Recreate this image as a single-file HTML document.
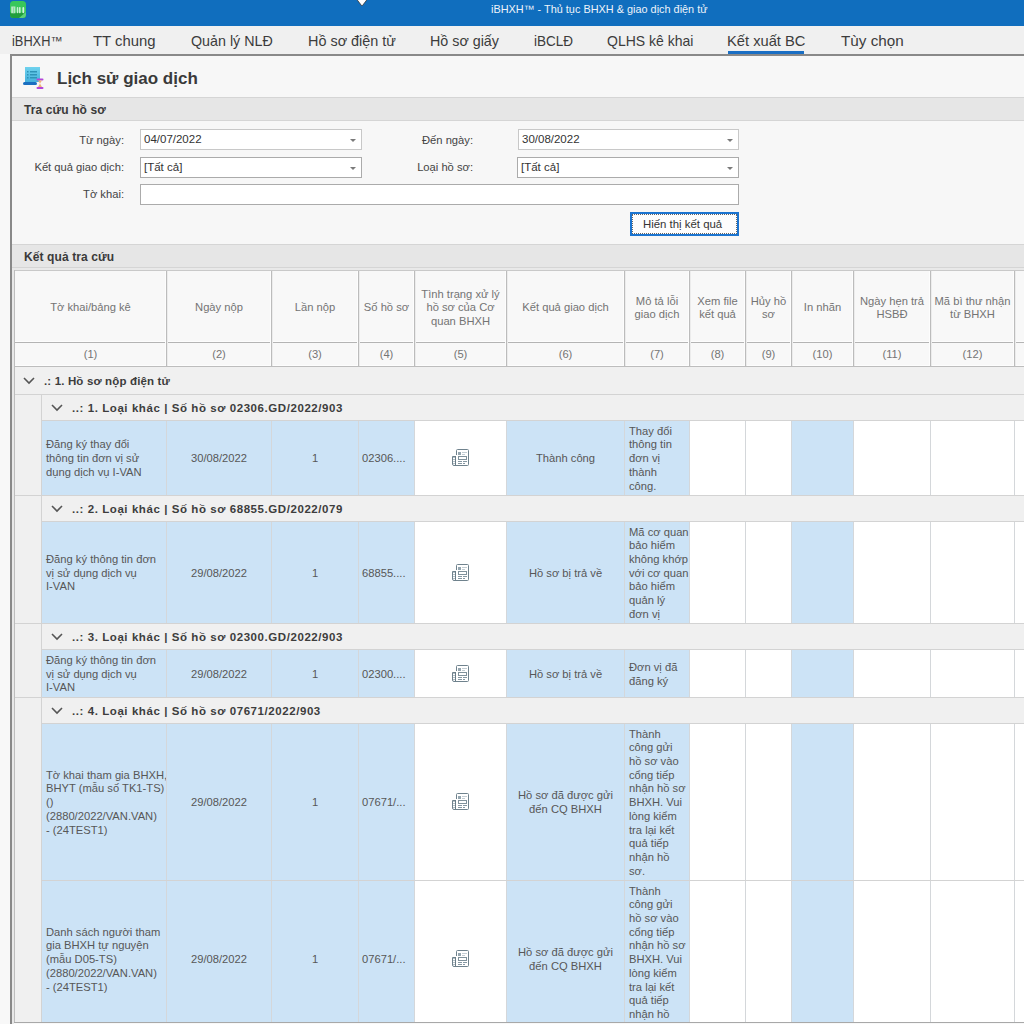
<!DOCTYPE html>
<html><head><meta charset="utf-8"><style>
html,body{margin:0;padding:0;width:1024px;height:1024px;overflow:hidden;background:#f7f7f7;position:relative;font-family:"Liberation Sans", sans-serif}
body>div,body>svg{position:absolute}
.t{white-space:nowrap}
.c{display:flex;align-items:safe center;overflow:hidden;box-sizing:border-box}
.c span{white-space:nowrap}
</style></head><body>
<div style="left:0px;top:0px;width:1024px;height:26px;background:#106ebe"></div>
<svg style="left:10px;top:1px" width="16" height="17" viewBox="0 0 16 17">
<defs><clipPath id="cp1"><rect x="0" y="0" width="16" height="17" rx="3.5"/></clipPath></defs>
<g clip-path="url(#cp1)">
<rect x="0" y="0" width="16" height="17" fill="#38c75a"/>
<rect x="0" y="11.5" width="16" height="6" fill="#219e3c"/>
<path d="M9 17 L16 11 L16 17 Z" fill="#5cd27a"/>
<path d="M1.2 5.6 H5.4 V12.2 H1.2 Z" fill="#b9e9c4"/>
<rect x="3.2" y="6.4" width="0.9" height="5.8" fill="#7fd494"/>
<rect x="6.8" y="6" width="1.5" height="6.2" rx="0.7" fill="#c9f0d2"/>
<rect x="9" y="6" width="1.6" height="6.2" rx="0.7" fill="#c9f0d2"/>
<rect x="12.4" y="6" width="1.8" height="6.2" rx="0.9" fill="#d2f3da"/>
</g></svg>
<svg style="left:356px;top:0px" width="12" height="7" viewBox="0 0 12 7"><path d="M0.5 -1 L5.5 5.5 L6.5 5.5 L11.5 -1 Z" fill="#fff" stroke="#333" stroke-width="0.8"/></svg>
<div class="t" style="left:491px;top:0px;font-size:11px;color:#eef3fa;line-height:18px;transform:scaleX(0.99);transform-origin:0 0">iBHXH™ - Thủ tục BHXH &amp; giao dịch điện tử</div>
<div style="left:0px;top:26px;width:1024px;height:28px;background:#f0f0f0"></div>
<div class="t" style="left:50.5px;top:31px;font-size:12px;color:#3c3c3c;line-height:20px;transform:scaleX(1.0);transform-origin:0 0">™</div>
<div class="t" style="left:11.5px;top:31px;font-size:14.5px;color:#3c3c3c;line-height:20px;transform:scaleX(0.8824);transform-origin:0 0">iBHXH</div>
<div class="t" style="left:93px;top:31px;font-size:14.5px;color:#3c3c3c;line-height:20px;transform:scaleX(1.0250);transform-origin:0 0">TT chung</div>
<div class="t" style="left:191px;top:31px;font-size:14.5px;color:#3c3c3c;line-height:20px;transform:scaleX(0.9848);transform-origin:0 0">Quản lý NLĐ</div>
<div class="t" style="left:308px;top:31px;font-size:14.5px;color:#3c3c3c;line-height:20px;transform:scaleX(0.9943);transform-origin:0 0">Hồ sơ điện tử</div>
<div class="t" style="left:430px;top:31px;font-size:14.5px;color:#3c3c3c;line-height:20px;transform:scaleX(0.9853);transform-origin:0 0">Hồ sơ giấy</div>
<div class="t" style="left:533.5px;top:31px;font-size:14.5px;color:#3c3c3c;line-height:20px;transform:scaleX(0.9313);transform-origin:0 0">iBCLĐ</div>
<div class="t" style="left:607px;top:31px;font-size:14.5px;color:#3c3c3c;line-height:20px;transform:scaleX(0.9659);transform-origin:0 0">QLHS kê khai</div>
<div class="t" style="left:727px;top:31px;font-size:14.5px;color:#3c3c3c;line-height:20px;transform:scaleX(1.0133);transform-origin:0 0">Kết xuất BC</div>
<div class="t" style="left:840.5px;top:31px;font-size:14.5px;color:#3c3c3c;line-height:20px;transform:scaleX(1.0508);transform-origin:0 0">Tùy chọn</div>
<div style="left:728px;top:51px;width:76px;height:3px;background:#1a6fc4"></div>
<div style="left:0px;top:54px;width:1024px;height:970px;background:#f8f8f8"></div>
<div style="left:10px;top:54px;width:1014px;height:2px;background:#898989"></div>
<div style="left:10px;top:54px;width:2px;height:970px;background:#898989"></div>
<div style="left:12px;top:56px;width:1012px;height:968px;background:#f7f7f7"></div>
<svg style="left:22px;top:66px" width="22" height="24" viewBox="0 0 22 24">
<defs><linearGradient id="g2" x1="0" y1="0" x2="0" y2="1"><stop offset="0" stop-color="#6fd2ee"/><stop offset="1" stop-color="#45b0dc"/></linearGradient></defs>
<rect x="3" y="1" width="15" height="15" fill="url(#g2)"/>
<rect x="5" y="5" width="1.5" height="1.5" fill="#2e93b8"/><rect x="8" y="5" width="7" height="1.5" fill="#2e93b8"/>
<rect x="5" y="8" width="1.5" height="1.5" fill="#2e93b8"/><rect x="8" y="8" width="7" height="1.5" fill="#2e93b8"/>
<rect x="5" y="11" width="1.5" height="1.5" fill="#2e93b8"/><rect x="8" y="11" width="7" height="1.5" fill="#2e93b8"/>
<rect x="1" y="16" width="14" height="3" rx="1.5" fill="#1a6fc0"/>
<rect x="14.5" y="12.5" width="7" height="2" rx="1" fill="#b347d9"/>
<rect x="14.5" y="21" width="7" height="2" rx="1" fill="#b347d9"/>
<path d="M16 14.5 L20 14.5 L18 17.5 L20 21 L16 21 L18 17.5 Z" fill="#f0b37a"/>
</svg>
<div class="t" style="left:57px;top:68px;font-size:17px;font-weight:bold;color:#3a3a3a;line-height:22px">Lịch sử giao dịch</div>
<div style="left:12px;top:97px;width:1012px;height:1px;background:#d5d5d5"></div>
<div style="left:12px;top:98px;width:1012px;height:22px;background:#e6e6e6"></div>
<div style="left:12px;top:120px;width:1012px;height:1px;background:#d5d5d5"></div>
<div class="t" style="left:24px;top:102px;font-size:12px;font-weight:bold;color:#3a3a3a;line-height:17px;letter-spacing:0.1px">Tra cứu hồ sơ</div>
<div class="t" style="left:-76px;top:133px;width:200px;text-align:right;font-size:11.2px;color:#444;line-height:14px">Từ ngày:</div>
<div class="t" style="left:-76px;top:160px;width:200px;text-align:right;font-size:11.2px;color:#444;line-height:14px">Kết quả giao dịch:</div>
<div class="t" style="left:-76px;top:187px;width:200px;text-align:right;font-size:11.2px;color:#444;line-height:14px">Tờ khai:</div>
<div style="left:140px;top:129px;width:222px;height:21px;background:#fff;border:1px solid #c8c8c8;box-sizing:border-box"></div>
<div class="t" style="left:144px;top:132px;font-size:11.5px;color:#333;line-height:14px">04/07/2022</div>
<svg style="left:350px;top:139px" width="6" height="4" viewBox="0 0 6 4"><path d="M0 0 L6 0 L3 3 Z" fill="#7a7a7a"/></svg>
<div style="left:140px;top:157px;width:222px;height:21px;background:#fff;border:1px solid #ababab;box-sizing:border-box"></div>
<div class="t" style="left:144px;top:160px;font-size:11.5px;color:#333;line-height:14px">[Tất cả]</div>
<svg style="left:350px;top:167px" width="6" height="4" viewBox="0 0 6 4"><path d="M0 0 L6 0 L3 3 Z" fill="#7a7a7a"/></svg>
<div style="left:140px;top:184px;width:599px;height:21px;background:#fff;border:1px solid #ababab;box-sizing:border-box"></div>
<div class="t" style="left:273px;top:133px;width:200px;text-align:right;font-size:11.2px;color:#444;line-height:14px">Đến ngày:</div>
<div class="t" style="left:273px;top:160px;width:200px;text-align:right;font-size:11.2px;color:#444;line-height:14px">Loại hồ sơ:</div>
<div style="left:518px;top:129px;width:221px;height:21px;background:#fff;border:1px solid #c8c8c8;box-sizing:border-box"></div>
<div class="t" style="left:522px;top:132px;font-size:11.5px;color:#333;line-height:14px">30/08/2022</div>
<svg style="left:727px;top:139px" width="6" height="4" viewBox="0 0 6 4"><path d="M0 0 L6 0 L3 3 Z" fill="#7a7a7a"/></svg>
<div style="left:517px;top:157px;width:222px;height:21px;background:#fff;border:1px solid #ababab;box-sizing:border-box"></div>
<div class="t" style="left:521px;top:160px;font-size:11.5px;color:#333;line-height:14px">[Tất cả]</div>
<svg style="left:727px;top:167px" width="6" height="4" viewBox="0 0 6 4"><path d="M0 0 L6 0 L3 3 Z" fill="#7a7a7a"/></svg>
<div style="left:630px;top:212px;width:109px;height:24px;background:#fdfdfd;border:2px solid #1b74d0;box-sizing:border-box"></div>
<div style="left:632px;top:214px;width:105px;height:20px;border:1px dotted #666;box-sizing:border-box"></div>
<div class="t" style="left:643px;top:217px;font-size:11.4px;color:#333;line-height:14px">Hiến thị kết quả</div>
<div style="left:12px;top:244px;width:1012px;height:1px;background:#d5d5d5"></div>
<div style="left:12px;top:245px;width:1012px;height:22px;background:#e6e6e6"></div>
<div style="left:12px;top:267px;width:1012px;height:1px;background:#d5d5d5"></div>
<div class="t" style="left:24px;top:249px;font-size:12px;font-weight:bold;color:#3a3a3a;line-height:17px;letter-spacing:0.1px">Kết quả tra cứu</div>
<div style="left:14px;top:270px;width:1010px;height:1px;background:#c9c9c9"></div>
<div style="left:14px;top:270px;width:1px;height:753px;background:#bdbdbd"></div>
<div style="left:15px;top:271px;width:1009px;height:72px;background:#f8f8f8"></div>
<div style="left:15px;top:343px;width:1009px;height:23px;background:#f8f8f8"></div>
<div style="left:15px;top:342px;width:1009px;height:1px;background:#b4b4b4"></div>
<div style="left:15px;top:366px;width:1009px;height:1px;background:#bdbdbd"></div>
<div style="left:15px;top:341px;width:1009px;height:1px;background:#fdfdfd"></div>
<div style="left:15px;top:365px;width:1009px;height:1px;background:#fdfdfd"></div>
<div style="left:165px;top:271px;width:1px;height:94px;background:#fdfdfd"></div>
<div style="left:166px;top:271px;width:1px;height:95px;background:#bcbcbc"></div>
<div style="left:167px;top:271px;width:1px;height:95px;background:#ececec"></div>
<div style="left:270px;top:271px;width:1px;height:94px;background:#fdfdfd"></div>
<div style="left:271px;top:271px;width:1px;height:95px;background:#bcbcbc"></div>
<div style="left:272px;top:271px;width:1px;height:95px;background:#ececec"></div>
<div style="left:357px;top:271px;width:1px;height:94px;background:#fdfdfd"></div>
<div style="left:358px;top:271px;width:1px;height:95px;background:#bcbcbc"></div>
<div style="left:359px;top:271px;width:1px;height:95px;background:#ececec"></div>
<div style="left:413px;top:271px;width:1px;height:94px;background:#fdfdfd"></div>
<div style="left:414px;top:271px;width:1px;height:95px;background:#bcbcbc"></div>
<div style="left:415px;top:271px;width:1px;height:95px;background:#ececec"></div>
<div style="left:505px;top:271px;width:1px;height:94px;background:#fdfdfd"></div>
<div style="left:506px;top:271px;width:1px;height:95px;background:#bcbcbc"></div>
<div style="left:507px;top:271px;width:1px;height:95px;background:#ececec"></div>
<div style="left:623px;top:271px;width:1px;height:94px;background:#fdfdfd"></div>
<div style="left:624px;top:271px;width:1px;height:95px;background:#bcbcbc"></div>
<div style="left:625px;top:271px;width:1px;height:95px;background:#ececec"></div>
<div style="left:688px;top:271px;width:1px;height:94px;background:#fdfdfd"></div>
<div style="left:689px;top:271px;width:1px;height:95px;background:#bcbcbc"></div>
<div style="left:690px;top:271px;width:1px;height:95px;background:#ececec"></div>
<div style="left:744px;top:271px;width:1px;height:94px;background:#fdfdfd"></div>
<div style="left:745px;top:271px;width:1px;height:95px;background:#bcbcbc"></div>
<div style="left:746px;top:271px;width:1px;height:95px;background:#ececec"></div>
<div style="left:790px;top:271px;width:1px;height:94px;background:#fdfdfd"></div>
<div style="left:791px;top:271px;width:1px;height:95px;background:#bcbcbc"></div>
<div style="left:792px;top:271px;width:1px;height:95px;background:#ececec"></div>
<div style="left:852px;top:271px;width:1px;height:94px;background:#fdfdfd"></div>
<div style="left:853px;top:271px;width:1px;height:95px;background:#bcbcbc"></div>
<div style="left:854px;top:271px;width:1px;height:95px;background:#ececec"></div>
<div style="left:929px;top:271px;width:1px;height:94px;background:#fdfdfd"></div>
<div style="left:930px;top:271px;width:1px;height:95px;background:#bcbcbc"></div>
<div style="left:931px;top:271px;width:1px;height:95px;background:#ececec"></div>
<div style="left:1013px;top:271px;width:1px;height:94px;background:#fdfdfd"></div>
<div style="left:1014px;top:271px;width:1px;height:95px;background:#bcbcbc"></div>
<div style="left:1015px;top:271px;width:1px;height:95px;background:#ececec"></div>
<div class="c" style="left:15px;top:271px;width:151px;height:71px;font-size:11.2px;color:#747474;line-height:13.5px;text-align:center;justify-content:center"><span style="position:relative;top:1.5px">Tờ khai/bảng kê</span></div>
<div class="c" style="left:15px;top:343px;width:151px;height:23px;font-size:11.2px;color:#747474;line-height:13.5px;text-align:center;justify-content:center"><span style="position:relative;top:0.5px">(1)</span></div>
<div class="c" style="left:167px;top:271px;width:104px;height:71px;font-size:11.2px;color:#747474;line-height:13.5px;text-align:center;justify-content:center"><span style="position:relative;top:1.5px">Ngày nộp</span></div>
<div class="c" style="left:167px;top:343px;width:104px;height:23px;font-size:11.2px;color:#747474;line-height:13.5px;text-align:center;justify-content:center"><span style="position:relative;top:0.5px">(2)</span></div>
<div class="c" style="left:272px;top:271px;width:86px;height:71px;font-size:11.2px;color:#747474;line-height:13.5px;text-align:center;justify-content:center"><span style="position:relative;top:1.5px">Lần nộp</span></div>
<div class="c" style="left:272px;top:343px;width:86px;height:23px;font-size:11.2px;color:#747474;line-height:13.5px;text-align:center;justify-content:center"><span style="position:relative;top:0.5px">(3)</span></div>
<div class="c" style="left:359px;top:271px;width:55px;height:71px;font-size:11.2px;color:#747474;line-height:13.5px;text-align:center;justify-content:center"><span style="position:relative;top:1.5px">Số hồ sơ</span></div>
<div class="c" style="left:359px;top:343px;width:55px;height:23px;font-size:11.2px;color:#747474;line-height:13.5px;text-align:center;justify-content:center"><span style="position:relative;top:0.5px">(4)</span></div>
<div class="c" style="left:415px;top:271px;width:91px;height:71px;font-size:11.2px;color:#747474;line-height:13.5px;text-align:center;justify-content:center"><span style="position:relative;top:1.5px">Tình trạng xử lý<br>hồ sơ của Cơ<br>quan BHXH</span></div>
<div class="c" style="left:415px;top:343px;width:91px;height:23px;font-size:11.2px;color:#747474;line-height:13.5px;text-align:center;justify-content:center"><span style="position:relative;top:0.5px">(5)</span></div>
<div class="c" style="left:507px;top:271px;width:117px;height:71px;font-size:11.2px;color:#747474;line-height:13.5px;text-align:center;justify-content:center"><span style="position:relative;top:1.5px">Kết quả giao dịch</span></div>
<div class="c" style="left:507px;top:343px;width:117px;height:23px;font-size:11.2px;color:#747474;line-height:13.5px;text-align:center;justify-content:center"><span style="position:relative;top:0.5px">(6)</span></div>
<div class="c" style="left:625px;top:271px;width:64px;height:71px;font-size:11.2px;color:#747474;line-height:13.5px;text-align:center;justify-content:center"><span style="position:relative;top:1.5px">Mô tả lỗi<br>giao dịch</span></div>
<div class="c" style="left:625px;top:343px;width:64px;height:23px;font-size:11.2px;color:#747474;line-height:13.5px;text-align:center;justify-content:center"><span style="position:relative;top:0.5px">(7)</span></div>
<div class="c" style="left:690px;top:271px;width:55px;height:71px;font-size:11.2px;color:#747474;line-height:13.5px;text-align:center;justify-content:center"><span style="position:relative;top:1.5px">Xem file<br>kết quả</span></div>
<div class="c" style="left:690px;top:343px;width:55px;height:23px;font-size:11.2px;color:#747474;line-height:13.5px;text-align:center;justify-content:center"><span style="position:relative;top:0.5px">(8)</span></div>
<div class="c" style="left:746px;top:271px;width:45px;height:71px;font-size:11.2px;color:#747474;line-height:13.5px;text-align:center;justify-content:center"><span style="position:relative;top:1.5px">Hủy hồ<br>sơ</span></div>
<div class="c" style="left:746px;top:343px;width:45px;height:23px;font-size:11.2px;color:#747474;line-height:13.5px;text-align:center;justify-content:center"><span style="position:relative;top:0.5px">(9)</span></div>
<div class="c" style="left:792px;top:271px;width:61px;height:71px;font-size:11.2px;color:#747474;line-height:13.5px;text-align:center;justify-content:center"><span style="position:relative;top:1.5px">In nhãn</span></div>
<div class="c" style="left:792px;top:343px;width:61px;height:23px;font-size:11.2px;color:#747474;line-height:13.5px;text-align:center;justify-content:center"><span style="position:relative;top:0.5px">(10)</span></div>
<div class="c" style="left:854px;top:271px;width:76px;height:71px;font-size:11.2px;color:#747474;line-height:13.5px;text-align:center;justify-content:center"><span style="position:relative;top:1.5px">Ngày hẹn trả<br>HSBĐ</span></div>
<div class="c" style="left:854px;top:343px;width:76px;height:23px;font-size:11.2px;color:#747474;line-height:13.5px;text-align:center;justify-content:center"><span style="position:relative;top:0.5px">(11)</span></div>
<div class="c" style="left:931px;top:271px;width:83px;height:71px;font-size:11.2px;color:#747474;line-height:13.5px;text-align:center;justify-content:center"><span style="position:relative;top:1.5px">Mã bì thư nhận<br>từ BHXH</span></div>
<div class="c" style="left:931px;top:343px;width:83px;height:23px;font-size:11.2px;color:#747474;line-height:13.5px;text-align:center;justify-content:center"><span style="position:relative;top:0.5px">(12)</span></div>
<div style="left:15px;top:367px;width:1009px;height:27px;background:#f0f0f0"></div>
<div style="left:15px;top:394px;width:1009px;height:1px;background:#d3d3d3"></div>
<svg style="left:23px;top:377px" width="12" height="8" viewBox="0 0 12 8"><path d="M1 1 L6 6 L11 1" fill="none" stroke="#555" stroke-width="1.6"/></svg>
<div class="t" style="left:44px;top:374px;font-size:11.5px;font-weight:bold;color:#3d3d3d;line-height:14px;letter-spacing:0.15px">.: 1. Hồ sơ nộp điện tử</div>
<div style="left:15px;top:395px;width:26px;height:627px;background:#f0f0f0"></div>
<div style="left:41px;top:395px;width:1px;height:627px;background:#d3d3d3"></div>
<div style="left:42px;top:395px;width:982px;height:25px;background:#f0f0f0"></div>
<div style="left:42px;top:420px;width:982px;height:1px;background:#d3d3d3"></div>
<svg style="left:51px;top:404px" width="12" height="8" viewBox="0 0 12 8"><path d="M1 1 L6 6 L11 1" fill="none" stroke="#555" stroke-width="1.6"/></svg>
<div class="t" style="left:72px;top:401px;font-size:11.5px;font-weight:bold;color:#3d3d3d;line-height:14px;letter-spacing:0.57px">..: 1. Loại khác | Số hồ sơ 02306.GD/2022/903</div>
<div style="left:42px;top:421px;width:124px;height:74px;background:#cce3f6"></div>
<div style="left:166px;top:421px;width:105px;height:74px;background:#cce3f6"></div>
<div style="left:271px;top:421px;width:87px;height:74px;background:#cce3f6"></div>
<div style="left:358px;top:421px;width:56px;height:74px;background:#cce3f6"></div>
<div style="left:414px;top:421px;width:92px;height:74px;background:#ffffff"></div>
<div style="left:506px;top:421px;width:118px;height:74px;background:#cce3f6"></div>
<div style="left:624px;top:421px;width:65px;height:74px;background:#cce3f6"></div>
<div style="left:689px;top:421px;width:56px;height:74px;background:#ffffff"></div>
<div style="left:745px;top:421px;width:46px;height:74px;background:#ffffff"></div>
<div style="left:791px;top:421px;width:62px;height:74px;background:#cce3f6"></div>
<div style="left:853px;top:421px;width:77px;height:74px;background:#ffffff"></div>
<div style="left:930px;top:421px;width:84px;height:74px;background:#ffffff"></div>
<div style="left:1014px;top:421px;width:10px;height:74px;background:#ffffff"></div>
<div style="left:166px;top:421px;width:1px;height:74px;background:#d4d7da"></div>
<div style="left:271px;top:421px;width:1px;height:74px;background:#d4d7da"></div>
<div style="left:358px;top:421px;width:1px;height:74px;background:#d4d7da"></div>
<div style="left:414px;top:421px;width:1px;height:74px;background:#d4d7da"></div>
<div style="left:506px;top:421px;width:1px;height:74px;background:#d4d7da"></div>
<div style="left:624px;top:421px;width:1px;height:74px;background:#d4d7da"></div>
<div style="left:689px;top:421px;width:1px;height:74px;background:#d4d7da"></div>
<div style="left:745px;top:421px;width:1px;height:74px;background:#d4d7da"></div>
<div style="left:791px;top:421px;width:1px;height:74px;background:#d4d7da"></div>
<div style="left:853px;top:421px;width:1px;height:74px;background:#d4d7da"></div>
<div style="left:930px;top:421px;width:1px;height:74px;background:#d4d7da"></div>
<div style="left:1014px;top:421px;width:1px;height:74px;background:#d4d7da"></div>
<div style="left:15px;top:495px;width:1009px;height:1px;background:#d3d3d3"></div>
<div class="c" style="left:43px;top:421px;width:123px;height:74px;justify-content:flex-start;font-size:11.2px;color:#575757;line-height:13.7px"><span style="padding:2px 3px 0;text-align:left">Đăng ký thay đổi<br>thông tin đơn vị sử<br>dụng dịch vụ I-VAN</span></div>
<div class="c" style="left:167px;top:421px;width:104px;height:74px;justify-content:center;font-size:11.2px;color:#575757;line-height:13.7px"><span style="padding:2px 5px 0;text-align:center">30/08/2022</span></div>
<div class="c" style="left:272px;top:421px;width:86px;height:74px;justify-content:center;font-size:11.2px;color:#575757;line-height:13.7px"><span style="padding:2px 5px 0;text-align:center">1</span></div>
<div class="c" style="left:359px;top:421px;width:55px;height:74px;justify-content:flex-start;font-size:11.2px;color:#575757;line-height:13.7px"><span style="padding:2px 3px 0;text-align:left">02306....</span></div>
<div style="left:452px;top:449px;width:17px;height:17px"><svg width="17" height="17" viewBox="0 0 17 17" shape-rendering="crispEdges">
<rect x="4" y="0" width="13" height="17" rx="1" fill="#fff"/>
<path d="M4.5 6 V1.5 Q4.5 0.5 5.5 0.5 H15.5 Q16.5 0.5 16.5 1.5 V15.5 Q16.5 16.5 15.5 16.5 H2 Q0.5 16.5 0.5 15 V7.5 H3.5" fill="none" stroke="#6f828d" stroke-width="1" shape-rendering="geometricPrecision"/>
<rect x="3" y="7" width="1.4" height="9" fill="#6a7d88"/>
<rect x="1" y="8" width="2" height="1" fill="#b5c1c8"/><rect x="1" y="10" width="2" height="1" fill="#b5c1c8"/><rect x="1" y="12" width="2" height="1" fill="#b5c1c8"/><rect x="1" y="14" width="2" height="1" fill="#b5c1c8"/>
<rect x="6" y="3" width="3" height="3" fill="#95a6b0"/>
<rect x="10" y="3" width="5" height="1" fill="#c3cdd3"/><rect x="10" y="5" width="3" height="1" fill="#c3cdd3"/>
<rect x="6.5" y="7.5" width="8" height="3" fill="none" stroke="#7f919b" stroke-width="1"/>
<rect x="6" y="12" width="4" height="1" fill="#8597a2"/><rect x="11" y="12" width="4" height="1" fill="#8597a2"/>
<rect x="6" y="14" width="4" height="1" fill="#8597a2"/><rect x="11" y="14" width="2" height="1" fill="#8597a2"/>
</svg></div>
<div class="c" style="left:507px;top:421px;width:117px;height:74px;justify-content:center;font-size:11.2px;color:#575757;line-height:13.7px"><span style="padding:2px 5px 0;text-align:center">Thành công</span></div>
<div class="c" style="left:625px;top:421px;width:64px;height:74px;font-size:11.2px;color:#575757;line-height:13.7px"><span style="padding:2px 0 0 4px;text-align:left">Thay đổi<br>thông tin<br>đơn vị<br>thành<br>công.</span></div>
<div style="left:42px;top:496px;width:982px;height:25px;background:#f0f0f0"></div>
<div style="left:42px;top:521px;width:982px;height:1px;background:#d3d3d3"></div>
<svg style="left:51px;top:505px" width="12" height="8" viewBox="0 0 12 8"><path d="M1 1 L6 6 L11 1" fill="none" stroke="#555" stroke-width="1.6"/></svg>
<div class="t" style="left:72px;top:502px;font-size:11.5px;font-weight:bold;color:#3d3d3d;line-height:14px;letter-spacing:0.57px">..: 2. Loại khác | Số hồ sơ 68855.GD/2022/079</div>
<div style="left:42px;top:522px;width:124px;height:101px;background:#cce3f6"></div>
<div style="left:166px;top:522px;width:105px;height:101px;background:#cce3f6"></div>
<div style="left:271px;top:522px;width:87px;height:101px;background:#cce3f6"></div>
<div style="left:358px;top:522px;width:56px;height:101px;background:#cce3f6"></div>
<div style="left:414px;top:522px;width:92px;height:101px;background:#ffffff"></div>
<div style="left:506px;top:522px;width:118px;height:101px;background:#cce3f6"></div>
<div style="left:624px;top:522px;width:65px;height:101px;background:#cce3f6"></div>
<div style="left:689px;top:522px;width:56px;height:101px;background:#ffffff"></div>
<div style="left:745px;top:522px;width:46px;height:101px;background:#ffffff"></div>
<div style="left:791px;top:522px;width:62px;height:101px;background:#cce3f6"></div>
<div style="left:853px;top:522px;width:77px;height:101px;background:#ffffff"></div>
<div style="left:930px;top:522px;width:84px;height:101px;background:#ffffff"></div>
<div style="left:1014px;top:522px;width:10px;height:101px;background:#ffffff"></div>
<div style="left:166px;top:522px;width:1px;height:101px;background:#d4d7da"></div>
<div style="left:271px;top:522px;width:1px;height:101px;background:#d4d7da"></div>
<div style="left:358px;top:522px;width:1px;height:101px;background:#d4d7da"></div>
<div style="left:414px;top:522px;width:1px;height:101px;background:#d4d7da"></div>
<div style="left:506px;top:522px;width:1px;height:101px;background:#d4d7da"></div>
<div style="left:624px;top:522px;width:1px;height:101px;background:#d4d7da"></div>
<div style="left:689px;top:522px;width:1px;height:101px;background:#d4d7da"></div>
<div style="left:745px;top:522px;width:1px;height:101px;background:#d4d7da"></div>
<div style="left:791px;top:522px;width:1px;height:101px;background:#d4d7da"></div>
<div style="left:853px;top:522px;width:1px;height:101px;background:#d4d7da"></div>
<div style="left:930px;top:522px;width:1px;height:101px;background:#d4d7da"></div>
<div style="left:1014px;top:522px;width:1px;height:101px;background:#d4d7da"></div>
<div style="left:15px;top:623px;width:1009px;height:1px;background:#d3d3d3"></div>
<div class="c" style="left:43px;top:522px;width:123px;height:101px;justify-content:flex-start;font-size:11.2px;color:#575757;line-height:13.7px"><span style="padding:2px 3px 0;text-align:left">Đăng ký thông tin đơn<br>vị sử dụng dịch vụ<br>I-VAN</span></div>
<div class="c" style="left:167px;top:522px;width:104px;height:101px;justify-content:center;font-size:11.2px;color:#575757;line-height:13.7px"><span style="padding:2px 5px 0;text-align:center">29/08/2022</span></div>
<div class="c" style="left:272px;top:522px;width:86px;height:101px;justify-content:center;font-size:11.2px;color:#575757;line-height:13.7px"><span style="padding:2px 5px 0;text-align:center">1</span></div>
<div class="c" style="left:359px;top:522px;width:55px;height:101px;justify-content:flex-start;font-size:11.2px;color:#575757;line-height:13.7px"><span style="padding:2px 3px 0;text-align:left">68855....</span></div>
<div style="left:452px;top:564px;width:17px;height:17px"><svg width="17" height="17" viewBox="0 0 17 17" shape-rendering="crispEdges">
<rect x="4" y="0" width="13" height="17" rx="1" fill="#fff"/>
<path d="M4.5 6 V1.5 Q4.5 0.5 5.5 0.5 H15.5 Q16.5 0.5 16.5 1.5 V15.5 Q16.5 16.5 15.5 16.5 H2 Q0.5 16.5 0.5 15 V7.5 H3.5" fill="none" stroke="#6f828d" stroke-width="1" shape-rendering="geometricPrecision"/>
<rect x="3" y="7" width="1.4" height="9" fill="#6a7d88"/>
<rect x="1" y="8" width="2" height="1" fill="#b5c1c8"/><rect x="1" y="10" width="2" height="1" fill="#b5c1c8"/><rect x="1" y="12" width="2" height="1" fill="#b5c1c8"/><rect x="1" y="14" width="2" height="1" fill="#b5c1c8"/>
<rect x="6" y="3" width="3" height="3" fill="#95a6b0"/>
<rect x="10" y="3" width="5" height="1" fill="#c3cdd3"/><rect x="10" y="5" width="3" height="1" fill="#c3cdd3"/>
<rect x="6.5" y="7.5" width="8" height="3" fill="none" stroke="#7f919b" stroke-width="1"/>
<rect x="6" y="12" width="4" height="1" fill="#8597a2"/><rect x="11" y="12" width="4" height="1" fill="#8597a2"/>
<rect x="6" y="14" width="4" height="1" fill="#8597a2"/><rect x="11" y="14" width="2" height="1" fill="#8597a2"/>
</svg></div>
<div class="c" style="left:507px;top:522px;width:117px;height:101px;justify-content:center;font-size:11.2px;color:#575757;line-height:13.7px"><span style="padding:2px 5px 0;text-align:center">Hồ sơ bị trả về</span></div>
<div class="c" style="left:625px;top:522px;width:64px;height:101px;font-size:11.2px;color:#575757;line-height:13.7px"><span style="padding:2px 0 0 4px;text-align:left">Mã cơ quan<br>bảo hiểm<br>không khớp<br>với cơ quan<br>bảo hiểm<br>quản lý<br>đơn vị</span></div>
<div style="left:42px;top:624px;width:982px;height:25px;background:#f0f0f0"></div>
<div style="left:42px;top:649px;width:982px;height:1px;background:#d3d3d3"></div>
<svg style="left:51px;top:633px" width="12" height="8" viewBox="0 0 12 8"><path d="M1 1 L6 6 L11 1" fill="none" stroke="#555" stroke-width="1.6"/></svg>
<div class="t" style="left:72px;top:630px;font-size:11.5px;font-weight:bold;color:#3d3d3d;line-height:14px;letter-spacing:0.57px">..: 3. Loại khác | Số hồ sơ 02300.GD/2022/903</div>
<div style="left:42px;top:650px;width:124px;height:47px;background:#cce3f6"></div>
<div style="left:166px;top:650px;width:105px;height:47px;background:#cce3f6"></div>
<div style="left:271px;top:650px;width:87px;height:47px;background:#cce3f6"></div>
<div style="left:358px;top:650px;width:56px;height:47px;background:#cce3f6"></div>
<div style="left:414px;top:650px;width:92px;height:47px;background:#ffffff"></div>
<div style="left:506px;top:650px;width:118px;height:47px;background:#cce3f6"></div>
<div style="left:624px;top:650px;width:65px;height:47px;background:#cce3f6"></div>
<div style="left:689px;top:650px;width:56px;height:47px;background:#ffffff"></div>
<div style="left:745px;top:650px;width:46px;height:47px;background:#ffffff"></div>
<div style="left:791px;top:650px;width:62px;height:47px;background:#cce3f6"></div>
<div style="left:853px;top:650px;width:77px;height:47px;background:#ffffff"></div>
<div style="left:930px;top:650px;width:84px;height:47px;background:#ffffff"></div>
<div style="left:1014px;top:650px;width:10px;height:47px;background:#ffffff"></div>
<div style="left:166px;top:650px;width:1px;height:47px;background:#d4d7da"></div>
<div style="left:271px;top:650px;width:1px;height:47px;background:#d4d7da"></div>
<div style="left:358px;top:650px;width:1px;height:47px;background:#d4d7da"></div>
<div style="left:414px;top:650px;width:1px;height:47px;background:#d4d7da"></div>
<div style="left:506px;top:650px;width:1px;height:47px;background:#d4d7da"></div>
<div style="left:624px;top:650px;width:1px;height:47px;background:#d4d7da"></div>
<div style="left:689px;top:650px;width:1px;height:47px;background:#d4d7da"></div>
<div style="left:745px;top:650px;width:1px;height:47px;background:#d4d7da"></div>
<div style="left:791px;top:650px;width:1px;height:47px;background:#d4d7da"></div>
<div style="left:853px;top:650px;width:1px;height:47px;background:#d4d7da"></div>
<div style="left:930px;top:650px;width:1px;height:47px;background:#d4d7da"></div>
<div style="left:1014px;top:650px;width:1px;height:47px;background:#d4d7da"></div>
<div style="left:15px;top:697px;width:1009px;height:1px;background:#d3d3d3"></div>
<div class="c" style="left:43px;top:650px;width:123px;height:47px;justify-content:flex-start;font-size:11.2px;color:#575757;line-height:13.7px"><span style="padding:2px 3px 0;text-align:left">Đăng ký thông tin đơn<br>vị sử dụng dịch vụ<br>I-VAN</span></div>
<div class="c" style="left:167px;top:650px;width:104px;height:47px;justify-content:center;font-size:11.2px;color:#575757;line-height:13.7px"><span style="padding:2px 5px 0;text-align:center">29/08/2022</span></div>
<div class="c" style="left:272px;top:650px;width:86px;height:47px;justify-content:center;font-size:11.2px;color:#575757;line-height:13.7px"><span style="padding:2px 5px 0;text-align:center">1</span></div>
<div class="c" style="left:359px;top:650px;width:55px;height:47px;justify-content:flex-start;font-size:11.2px;color:#575757;line-height:13.7px"><span style="padding:2px 3px 0;text-align:left">02300....</span></div>
<div style="left:452px;top:665px;width:17px;height:17px"><svg width="17" height="17" viewBox="0 0 17 17" shape-rendering="crispEdges">
<rect x="4" y="0" width="13" height="17" rx="1" fill="#fff"/>
<path d="M4.5 6 V1.5 Q4.5 0.5 5.5 0.5 H15.5 Q16.5 0.5 16.5 1.5 V15.5 Q16.5 16.5 15.5 16.5 H2 Q0.5 16.5 0.5 15 V7.5 H3.5" fill="none" stroke="#6f828d" stroke-width="1" shape-rendering="geometricPrecision"/>
<rect x="3" y="7" width="1.4" height="9" fill="#6a7d88"/>
<rect x="1" y="8" width="2" height="1" fill="#b5c1c8"/><rect x="1" y="10" width="2" height="1" fill="#b5c1c8"/><rect x="1" y="12" width="2" height="1" fill="#b5c1c8"/><rect x="1" y="14" width="2" height="1" fill="#b5c1c8"/>
<rect x="6" y="3" width="3" height="3" fill="#95a6b0"/>
<rect x="10" y="3" width="5" height="1" fill="#c3cdd3"/><rect x="10" y="5" width="3" height="1" fill="#c3cdd3"/>
<rect x="6.5" y="7.5" width="8" height="3" fill="none" stroke="#7f919b" stroke-width="1"/>
<rect x="6" y="12" width="4" height="1" fill="#8597a2"/><rect x="11" y="12" width="4" height="1" fill="#8597a2"/>
<rect x="6" y="14" width="4" height="1" fill="#8597a2"/><rect x="11" y="14" width="2" height="1" fill="#8597a2"/>
</svg></div>
<div class="c" style="left:507px;top:650px;width:117px;height:47px;justify-content:center;font-size:11.2px;color:#575757;line-height:13.7px"><span style="padding:2px 5px 0;text-align:center">Hồ sơ bị trả về</span></div>
<div class="c" style="left:625px;top:650px;width:64px;height:47px;font-size:11.2px;color:#575757;line-height:13.7px"><span style="padding:2px 0 0 4px;text-align:left">Đơn vị đã<br>đăng ký</span></div>
<div style="left:42px;top:698px;width:982px;height:25px;background:#f0f0f0"></div>
<div style="left:42px;top:723px;width:982px;height:1px;background:#d3d3d3"></div>
<svg style="left:51px;top:707px" width="12" height="8" viewBox="0 0 12 8"><path d="M1 1 L6 6 L11 1" fill="none" stroke="#555" stroke-width="1.6"/></svg>
<div class="t" style="left:72px;top:704px;font-size:11.5px;font-weight:bold;color:#3d3d3d;line-height:14px;letter-spacing:0.57px">..: 4. Loại khác | Số hồ sơ 07671/2022/903</div>
<div style="left:42px;top:724px;width:124px;height:156px;background:#cce3f6"></div>
<div style="left:166px;top:724px;width:105px;height:156px;background:#cce3f6"></div>
<div style="left:271px;top:724px;width:87px;height:156px;background:#cce3f6"></div>
<div style="left:358px;top:724px;width:56px;height:156px;background:#cce3f6"></div>
<div style="left:414px;top:724px;width:92px;height:156px;background:#ffffff"></div>
<div style="left:506px;top:724px;width:118px;height:156px;background:#cce3f6"></div>
<div style="left:624px;top:724px;width:65px;height:156px;background:#cce3f6"></div>
<div style="left:689px;top:724px;width:56px;height:156px;background:#ffffff"></div>
<div style="left:745px;top:724px;width:46px;height:156px;background:#ffffff"></div>
<div style="left:791px;top:724px;width:62px;height:156px;background:#cce3f6"></div>
<div style="left:853px;top:724px;width:77px;height:156px;background:#ffffff"></div>
<div style="left:930px;top:724px;width:84px;height:156px;background:#ffffff"></div>
<div style="left:1014px;top:724px;width:10px;height:156px;background:#ffffff"></div>
<div style="left:166px;top:724px;width:1px;height:156px;background:#d4d7da"></div>
<div style="left:271px;top:724px;width:1px;height:156px;background:#d4d7da"></div>
<div style="left:358px;top:724px;width:1px;height:156px;background:#d4d7da"></div>
<div style="left:414px;top:724px;width:1px;height:156px;background:#d4d7da"></div>
<div style="left:506px;top:724px;width:1px;height:156px;background:#d4d7da"></div>
<div style="left:624px;top:724px;width:1px;height:156px;background:#d4d7da"></div>
<div style="left:689px;top:724px;width:1px;height:156px;background:#d4d7da"></div>
<div style="left:745px;top:724px;width:1px;height:156px;background:#d4d7da"></div>
<div style="left:791px;top:724px;width:1px;height:156px;background:#d4d7da"></div>
<div style="left:853px;top:724px;width:1px;height:156px;background:#d4d7da"></div>
<div style="left:930px;top:724px;width:1px;height:156px;background:#d4d7da"></div>
<div style="left:1014px;top:724px;width:1px;height:156px;background:#d4d7da"></div>
<div style="left:42px;top:880px;width:982px;height:1px;background:#d3d3d3"></div>
<div class="c" style="left:43px;top:724px;width:123px;height:156px;justify-content:flex-start;font-size:11.2px;color:#575757;line-height:13.7px"><span style="padding:2px 3px 0;text-align:left">Tờ khai tham gia BHXH,<br>BHYT (mẫu số TK1-TS)<br>()<br>(2880/2022/VAN.VAN)<br>- (24TEST1)</span></div>
<div class="c" style="left:167px;top:724px;width:104px;height:156px;justify-content:center;font-size:11.2px;color:#575757;line-height:13.7px"><span style="padding:2px 5px 0;text-align:center">29/08/2022</span></div>
<div class="c" style="left:272px;top:724px;width:86px;height:156px;justify-content:center;font-size:11.2px;color:#575757;line-height:13.7px"><span style="padding:2px 5px 0;text-align:center">1</span></div>
<div class="c" style="left:359px;top:724px;width:55px;height:156px;justify-content:flex-start;font-size:11.2px;color:#575757;line-height:13.7px"><span style="padding:2px 3px 0;text-align:left">07671/...</span></div>
<div style="left:452px;top:793px;width:17px;height:17px"><svg width="17" height="17" viewBox="0 0 17 17" shape-rendering="crispEdges">
<rect x="4" y="0" width="13" height="17" rx="1" fill="#fff"/>
<path d="M4.5 6 V1.5 Q4.5 0.5 5.5 0.5 H15.5 Q16.5 0.5 16.5 1.5 V15.5 Q16.5 16.5 15.5 16.5 H2 Q0.5 16.5 0.5 15 V7.5 H3.5" fill="none" stroke="#6f828d" stroke-width="1" shape-rendering="geometricPrecision"/>
<rect x="3" y="7" width="1.4" height="9" fill="#6a7d88"/>
<rect x="1" y="8" width="2" height="1" fill="#b5c1c8"/><rect x="1" y="10" width="2" height="1" fill="#b5c1c8"/><rect x="1" y="12" width="2" height="1" fill="#b5c1c8"/><rect x="1" y="14" width="2" height="1" fill="#b5c1c8"/>
<rect x="6" y="3" width="3" height="3" fill="#95a6b0"/>
<rect x="10" y="3" width="5" height="1" fill="#c3cdd3"/><rect x="10" y="5" width="3" height="1" fill="#c3cdd3"/>
<rect x="6.5" y="7.5" width="8" height="3" fill="none" stroke="#7f919b" stroke-width="1"/>
<rect x="6" y="12" width="4" height="1" fill="#8597a2"/><rect x="11" y="12" width="4" height="1" fill="#8597a2"/>
<rect x="6" y="14" width="4" height="1" fill="#8597a2"/><rect x="11" y="14" width="2" height="1" fill="#8597a2"/>
</svg></div>
<div class="c" style="left:507px;top:724px;width:117px;height:156px;justify-content:center;font-size:11.2px;color:#575757;line-height:13.7px"><span style="padding:2px 5px 0;text-align:center">Hồ sơ đã được gửi<br>đến CQ BHXH</span></div>
<div class="c" style="left:625px;top:724px;width:64px;height:156px;font-size:11.2px;color:#575757;line-height:13.7px"><span style="padding:2px 0 0 4px;text-align:left">Thành<br>công gửi<br>hồ sơ vào<br>cổng tiếp<br>nhận hồ sơ<br>BHXH. Vui<br>lòng kiểm<br>tra lại kết<br>quả tiếp<br>nhận hồ<br>sơ.</span></div>
<div style="left:42px;top:881px;width:124px;height:156px;background:#cce3f6"></div>
<div style="left:166px;top:881px;width:105px;height:156px;background:#cce3f6"></div>
<div style="left:271px;top:881px;width:87px;height:156px;background:#cce3f6"></div>
<div style="left:358px;top:881px;width:56px;height:156px;background:#cce3f6"></div>
<div style="left:414px;top:881px;width:92px;height:156px;background:#ffffff"></div>
<div style="left:506px;top:881px;width:118px;height:156px;background:#cce3f6"></div>
<div style="left:624px;top:881px;width:65px;height:156px;background:#cce3f6"></div>
<div style="left:689px;top:881px;width:56px;height:156px;background:#ffffff"></div>
<div style="left:745px;top:881px;width:46px;height:156px;background:#ffffff"></div>
<div style="left:791px;top:881px;width:62px;height:156px;background:#cce3f6"></div>
<div style="left:853px;top:881px;width:77px;height:156px;background:#ffffff"></div>
<div style="left:930px;top:881px;width:84px;height:156px;background:#ffffff"></div>
<div style="left:1014px;top:881px;width:10px;height:156px;background:#ffffff"></div>
<div style="left:166px;top:881px;width:1px;height:156px;background:#d4d7da"></div>
<div style="left:271px;top:881px;width:1px;height:156px;background:#d4d7da"></div>
<div style="left:358px;top:881px;width:1px;height:156px;background:#d4d7da"></div>
<div style="left:414px;top:881px;width:1px;height:156px;background:#d4d7da"></div>
<div style="left:506px;top:881px;width:1px;height:156px;background:#d4d7da"></div>
<div style="left:624px;top:881px;width:1px;height:156px;background:#d4d7da"></div>
<div style="left:689px;top:881px;width:1px;height:156px;background:#d4d7da"></div>
<div style="left:745px;top:881px;width:1px;height:156px;background:#d4d7da"></div>
<div style="left:791px;top:881px;width:1px;height:156px;background:#d4d7da"></div>
<div style="left:853px;top:881px;width:1px;height:156px;background:#d4d7da"></div>
<div style="left:930px;top:881px;width:1px;height:156px;background:#d4d7da"></div>
<div style="left:1014px;top:881px;width:1px;height:156px;background:#d4d7da"></div>
<div style="left:42px;top:1037px;width:982px;height:1px;background:#d3d3d3"></div>
<div class="c" style="left:43px;top:881px;width:123px;height:156px;justify-content:flex-start;font-size:11.2px;color:#575757;line-height:13.7px"><span style="padding:2px 3px 0;text-align:left">Danh sách người tham<br>gia BHXH tự nguyện<br>(mẫu D05-TS)<br>(2880/2022/VAN.VAN)<br>- (24TEST1)</span></div>
<div class="c" style="left:167px;top:881px;width:104px;height:156px;justify-content:center;font-size:11.2px;color:#575757;line-height:13.7px"><span style="padding:2px 5px 0;text-align:center">29/08/2022</span></div>
<div class="c" style="left:272px;top:881px;width:86px;height:156px;justify-content:center;font-size:11.2px;color:#575757;line-height:13.7px"><span style="padding:2px 5px 0;text-align:center">1</span></div>
<div class="c" style="left:359px;top:881px;width:55px;height:156px;justify-content:flex-start;font-size:11.2px;color:#575757;line-height:13.7px"><span style="padding:2px 3px 0;text-align:left">07671/...</span></div>
<div style="left:452px;top:950px;width:17px;height:17px"><svg width="17" height="17" viewBox="0 0 17 17" shape-rendering="crispEdges">
<rect x="4" y="0" width="13" height="17" rx="1" fill="#fff"/>
<path d="M4.5 6 V1.5 Q4.5 0.5 5.5 0.5 H15.5 Q16.5 0.5 16.5 1.5 V15.5 Q16.5 16.5 15.5 16.5 H2 Q0.5 16.5 0.5 15 V7.5 H3.5" fill="none" stroke="#6f828d" stroke-width="1" shape-rendering="geometricPrecision"/>
<rect x="3" y="7" width="1.4" height="9" fill="#6a7d88"/>
<rect x="1" y="8" width="2" height="1" fill="#b5c1c8"/><rect x="1" y="10" width="2" height="1" fill="#b5c1c8"/><rect x="1" y="12" width="2" height="1" fill="#b5c1c8"/><rect x="1" y="14" width="2" height="1" fill="#b5c1c8"/>
<rect x="6" y="3" width="3" height="3" fill="#95a6b0"/>
<rect x="10" y="3" width="5" height="1" fill="#c3cdd3"/><rect x="10" y="5" width="3" height="1" fill="#c3cdd3"/>
<rect x="6.5" y="7.5" width="8" height="3" fill="none" stroke="#7f919b" stroke-width="1"/>
<rect x="6" y="12" width="4" height="1" fill="#8597a2"/><rect x="11" y="12" width="4" height="1" fill="#8597a2"/>
<rect x="6" y="14" width="4" height="1" fill="#8597a2"/><rect x="11" y="14" width="2" height="1" fill="#8597a2"/>
</svg></div>
<div class="c" style="left:507px;top:881px;width:117px;height:156px;justify-content:center;font-size:11.2px;color:#575757;line-height:13.7px"><span style="padding:2px 5px 0;text-align:center">Hồ sơ đã được gửi<br>đến CQ BHXH</span></div>
<div class="c" style="left:625px;top:881px;width:64px;height:156px;font-size:11.2px;color:#575757;line-height:13.7px"><span style="padding:2px 0 0 4px;text-align:left">Thành<br>công gửi<br>hồ sơ vào<br>cổng tiếp<br>nhận hồ sơ<br>BHXH. Vui<br>lòng kiểm<br>tra lại kết<br>quả tiếp<br>nhận hồ<br>sơ.</span></div>
<div style="left:14px;top:1022px;width:1010px;height:1px;background:#a8a8a8"></div>
<div style="left:0px;top:1023px;width:1024px;height:1px;background:#f8f8f8"></div>
<div style="left:10px;top:1023px;width:2px;height:1px;background:#898989"></div>
<div style="left:12px;top:268px;width:2px;height:756px;background:#e8e8e8"></div>
<div style="left:12px;top:268px;width:1012px;height:2px;background:#e9e9e9"></div>
</body></html>
